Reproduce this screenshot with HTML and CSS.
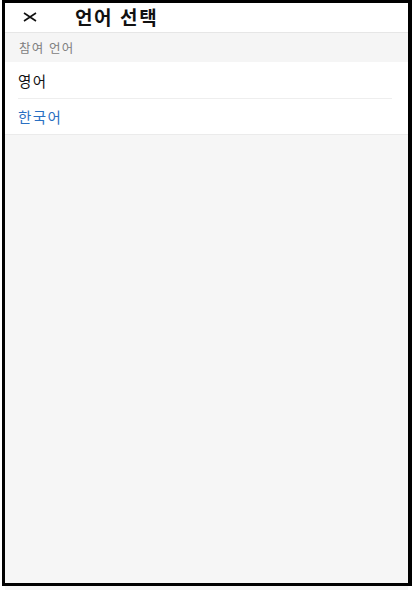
FILE: index.html
```html
<!DOCTYPE html>
<html lang="ko">
<head>
<meta charset="utf-8">
<link rel="stylesheet" href="styles.css">
</head>
<body>
<div class="frame">
  <header class="topbar">
    <span class="close">
      <svg width="14" height="10" viewBox="0 0 14 10"><path d="M1 1 L13 9 M13 1 L1 9" stroke="#111" stroke-width="1.6" fill="none"/></svg>
    </span>
    <h1 class="title">언어 선택</h1>
  </header>
  <div class="section">참여 언어</div>
  <ul class="list">
    <li class="item">영어</li>
    <li class="item active">한국어</li>
  </ul>
  <div class="rest"></div>
</div>
<div class="under"></div>
</body>
</html>
```
FILE: styles.css
```css
html, body {
  margin: 0;
  padding: 0;
  background: #fff;
  font-family: "Noto Sans CJK KR", "Noto Sans", sans-serif;
}
.frame {
  margin-left: 2px;
  width: 410px;
  height: 586px;
  box-sizing: border-box;
  border: 3px solid #000;
  border-right-width: 4px;
  background: #f6f6f6;
  display: flex;
  flex-direction: column;
  overflow: hidden;
}
.topbar {
  height: 29px;
  background: #fff;
  border-bottom: 1px solid #e6e6e6;
  display: flex;
  align-items: center;
  flex-shrink: 0;
}
.close {
  display: flex;
  margin-left: 18px;
  margin-top: -2px;
  width: 14px;
  height: 10px;
}
.title {
  margin: -3px 0 0 38px;
  font-size: 19px;
  font-weight: 700;
  letter-spacing: 1.6px;
  color: #111;
  line-height: 1;
}
.section {
  height: 29px;
  display: flex;
  align-items: center;
  padding-left: 14px;
  font-size: 12.5px;
  letter-spacing: 1.2px;
  color: #808080;
  background: #f5f5f5;
}
.list {
  list-style: none;
  margin: 0;
  padding: 0 0 0 13px;
  background: #fff;
  border-bottom: 1px solid #ebebeb;
}
.item {
  height: 36px;
  display: flex;
  align-items: center;
  font-size: 14.5px;
  letter-spacing: 1.4px;
  color: #111;
  margin-right: 16px;
}
.item + .item {
  border-top: 1px solid #eeeeee;
  height: 35px;
}
.item.active {
  color: #2a70c2;
}
.rest {
  flex: 1;
  background: #f6f6f6;
}
.under {
  margin-left: 5px;
  width: 403px;
  height: 4px;
  background: #f6f6f6;
}
```
